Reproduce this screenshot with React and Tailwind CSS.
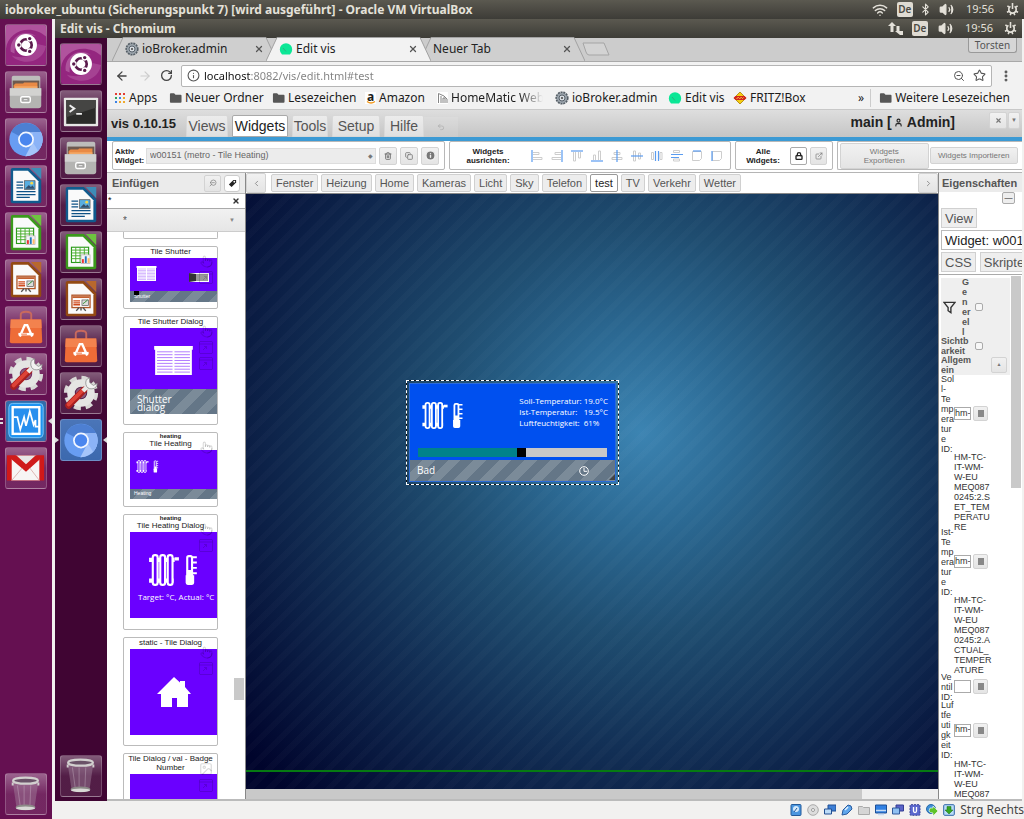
import React, { useState } from 'react';
import {
  ArrowLeft, ArrowRight, RotateCw, Info, ZoomOut, Star, MoreVertical, X, Wifi, Bluetooth, Volume2,
  Trash2, Copy, Lock, ExternalLink, ChevronLeft, ChevronRight, Undo2, Pointer, Image as ImageIcon, User,
} from 'lucide-react';

const UbuntuIcon = () => (
  <svg viewBox="0 0 42 42" className="w-full h-full">
    <rect width="42" height="42" rx="3" fill="#94267f" />
    <path d="M0 25C2 6 26-2 42 12V3q0-3-3-3H3Q0 0 0 3z" fill="#c678b6" opacity=".55" />
    <path d="M42 22C38 42 14 42 6 32c8 3 24 4 27-12z" fill="#c678b6" opacity=".35" />
    <path d="M5 28C3 12 20 3 32 12 20 7 8 14 9 30z" fill="#dba6d0" opacity=".35" />
    <circle cx="21" cy="21" r="11.5" fill="#fff" />
    <circle cx="21" cy="21" r="6" fill="none" stroke="#5a1a4c" strokeWidth="2.8" />
    <g stroke="#fff" strokeWidth="1.4" fill="#5a1a4c">
      <circle cx="13.4" cy="21" r="2.5" />
      <circle cx="24.9" cy="14.3" r="2.5" />
      <circle cx="24.9" cy="27.7" r="2.5" />
    </g>
  </svg>
);

const TerminalIcon = () => (
  <svg viewBox="0 0 42 42" className="w-full h-full">
    <rect x="3" y="7" width="36" height="30" rx="1" fill="#e6e6e4" />
    <rect x="5.5" y="9.5" width="31" height="25" fill="#2b2b29" />
    <path d="M5.5 9.5h31v8l-31 10z" fill="#454543" />
    <path d="M9 15l5 3.5-5 3.5M16 24h6" fill="none" stroke="#eee" strokeWidth="2" />
  </svg>
);

const FilesIcon = () => (
  <svg viewBox="0 0 42 42" className="w-full h-full">
    <path d="M6 6q0-2 2-2h26q2 0 2 2v14H6z" fill="#bdbdbb" />
    <path d="M7 9h28v11H7z" fill="#6d5a50" />
    <path d="M8 14l2-2h8l1-1h14v8H8z" fill="#e98a45" />
    <path d="M9 15h24v4H9z" fill="#f3a866" />
    <path d="M4 17h33v18q0 3-3 3H7q-3 0-3-3z" fill="#b4b4b2" />
    <path d="M4 17h33v8H4z" fill="#d2d2d0" />
    <rect x="15.5" y="26" width="10" height="6" rx="1.5" fill="#a9a9a7" stroke="#fff" strokeWidth="1.5" />
    <rect x="18" y="28.3" width="5" height="1.8" fill="#fff" stroke="#777" strokeWidth=".5" />
  </svg>
);

const ChromiumIcon = () => (
  <svg viewBox="0 0 42 42" className="w-full h-full">
    <circle cx="21" cy="21.5" r="17.5" fill="#689df2" />
    <path d="M21 21.5L5.5 13.5A17.5 17.5 0 0 1 37 14.5z" fill="#4d7fd2" />
    <path d="M21 14h15.8a17.5 17.5 0 0 1-16.5 25l7.5-14z" fill="#a5c5fa" />
    <path d="M28 14.500h8.800a17.500 17.500 0 0 1-3 19l-5-8z" fill="#8bb3f7" />
    <circle cx="21" cy="21.5" r="8.3" fill="#f3f7ff" />
    <circle cx="21" cy="21.5" r="6.5" fill="#4a86ee" />
  </svg>
);

const Paper = ({ color, light, children }) => (
  <svg viewBox="0 0 42 42" className="w-full h-full">
    <path d="M5 4q0-2 2-2h17l13 13v22q0 2-2 2H7q-2 0-2-2z" fill={color} />
    <path d="M7.5 5h15.5L34 16v20.5H7.5z" fill="#fafafa" />
    <path d="M26 2h11v12z" fill={light} />
    {children}
  </svg>
);

const WriterIcon = () => (
  <Paper color="#115b8e" light="#3d8cb7">
    <path d="M11 17h7M11 20h7M11 23h7M11 27h20M11 30h20M11 33h14" stroke="#0e5387" strokeWidth="1.3" />
    <rect x="19.5" y="15.5" width="11" height="9" fill="#58aee0" stroke="#333" strokeWidth=".6" />
    <path d="M20 24l4-4 2 2 2-1.500 2 3.500z" fill="#35506b" />
    <circle cx="27" cy="18" r="1.5" fill="#f6d84b" />
  </Paper>
);

const CalcIcon = () => (
  <Paper color="#3b9a1c" light="#6dc43f">
    <rect x="11" y="16" width="18" height="16" fill="#fff" stroke="#2a9a1a" strokeWidth="1.2" />
    <path d="M11 19h18M11 22h18M11 25h18M11 28h18M15.500 16v16M20 16v16M24.500 16v16" stroke="#49ad2c" strokeWidth="1" />
    <rect x="21" y="24" width="9.5" height="9" fill="#f4f4f4" stroke="#aaa" strokeWidth=".7" />
    <path d="M23 32.500v-4" stroke="#e33" strokeWidth="2" />
    <path d="M26 32.500v-7" stroke="#27b" strokeWidth="2" />
    <path d="M29 32.500v-5" stroke="#fb6" strokeWidth="2" />
  </Paper>
);

const ImpressIcon = () => (
  <Paper color="#934a13" light="#b8682d">
    <rect x="11.5" y="17" width="19" height="13" fill="#fff" stroke="#b2582a" strokeWidth="1.4" />
    <path d="M12 19h18" stroke="#c26030" strokeWidth="2" />
    <path d="M13 23h7M13 25h7M13 27h7" stroke="#cf4b1e" strokeWidth="1.4" />
    <rect x="22" y="22" width="7" height="6" fill="#dcdcdc" stroke="#555" strokeWidth=".7" />
    <path d="M23 26l2-1.500 3-2.500" fill="none" stroke="#2a8d2a" />
    <path d="M19 30l-3 3.500M23 30l3 3.500M21 30v3" stroke="#555" strokeWidth="1.5" />
  </Paper>
);

const SoftwareIcon = () => (
  <svg viewBox="0 0 42 42" className="w-full h-full">
    <path d="M15.500 14V8q0-3 5.500-3t5.500 3v6" fill="none" stroke="#c9695d" strokeWidth="2" />
    <path d="M5 13h32l1 23q0 2-2 2H6q-2 0-2-2z" fill="#ee6c37" />
    <path d="M5 13h32l.5 9h-33z" fill="#f3824e" />
    <path d="M14.500 31l5.200-12h2.600l5.200 12" fill="none" stroke="#fff" strokeWidth="2.5" />
    <path d="M13 28.500h16" stroke="#fff" strokeWidth="2.6" />
    <path d="M16 28.500h6" stroke="#ee6c37" strokeWidth="1" />
  </svg>
);

const SettingsIcon = () => (
  <svg viewBox="0 0 42 42" className="w-full h-full">
    <circle cx="21" cy="21" r="15.5" fill="none" stroke="#d8d8d6" strokeWidth="5" strokeDasharray="7.2 4.974" />
    <circle cx="21" cy="21" r="10.5" fill="none" stroke="#e5e5e3" strokeWidth="8" />
    <circle cx="21" cy="21" r="5.5" fill="#8b5a7c" />
    <path d="M8 34L24 18" stroke="#a91f1f" strokeWidth="7" strokeLinecap="round" />
    <path d="M8 33L23 18" stroke="#dd4337" strokeWidth="4" strokeLinecap="round" />
    <path d="M23 19L31 11" stroke="#e9e9e8" strokeWidth="4.5" />
    <path d="M30 5a6 6 0 1 0 8 6l-4 2-4-3z" fill="#f2f2f1" stroke="#888" strokeWidth=".8" />
  </svg>
);

const MonitorIcon = () => (
  <svg viewBox="0 0 42 42" className="w-full h-full">
    <rect width="42" height="42" rx="3" fill="#316cab" />
    <rect x="3" y="2.5" width="36" height="36" rx="4" fill="#1e93f1" stroke="#7cc6fb" />
    <rect x="7" y="6.5" width="28" height="28" fill="#278fee" stroke="#fff" strokeWidth="2.5" />
    <path d="M8 17h4l3 13 4-13 2 9 4-15 4 14 2-5v7h4" fill="none" stroke="#fff" strokeWidth="1.8" />
  </svg>
);

const GmailIcon = () => (
  <svg viewBox="0 0 42 42" className="w-full h-full">
    <path d="M1 8h39v26H1z" fill="#d01919" />
    <path d="M6 10h29v24H6z" fill="#f7f5f4" />
    <path d="M10 8h22L21 19z" fill="#e9e7e6" />
    <path d="M1 8h10l10 9L31 8h9L21 25z" fill="#cf1b1b" />
    <path d="M6 34l11-13M35 34L25 21" stroke="#dcb3b0" />
  </svg>
);

const TrashIcon = () => (
  <svg viewBox="0 0 42 42" className="w-full h-full">
    <path d="M7 8h27l-4 27q-9 5-19 0z" fill="#a98fa6" opacity=".4" />
    <path d="M12 12l3 22M19 12v24M26 12l-1 24" stroke="#d8cbd7" strokeWidth="1" opacity=".35" />
    <ellipse cx="20.5" cy="35" rx="10.5" ry="3" fill="#8c8a87" />
    <ellipse cx="20.5" cy="36" rx="10" ry="1.8" fill="#d9d8d6" />
    <ellipse cx="20.5" cy="7" rx="13" ry="3.2" fill="#6a5268" stroke="#d2d0cf" strokeWidth="2.4" />
    <path d="M7 9v3M34 9v3" stroke="#d2d0cf" strokeWidth="2" />
  </svg>
);

const GearBall = () => (
  <svg viewBox="0 0 14 14" className="w-[14px] h-[14px] shrink-0">
    <circle cx="7" cy="7" r="5.8" fill="#9aa3ab" stroke="#555e66" strokeWidth="1.6" strokeDasharray="2 .8" />
    <circle cx="7" cy="7" r="3" fill="#d8dde2" stroke="#59636c" />
    <circle cx="7" cy="7" r="1" fill="#444" />
  </svg>
);

const VisIcon = () => (
  <svg viewBox="0 0 14 14" className="w-[14px] h-[14px] shrink-0">
    <path d="M3 12.500Q.8 10.500.8 7.500a6.200 6.200 0 0 1 12.400 0q0 3-2.200 5z" fill="#0be796" />
    <path d="M4 6l3 3.500" stroke="#3a9f78" strokeWidth=".8" />
  </svg>
);

const FolderIcon = () => (
  <svg viewBox="0 0 14 12" className="w-[13px] h-[12px] shrink-0">
    <path d="M1 2q0-1 1-1h3.500L7 2.500h5.500q1 0 1 1V10q0 1-1 1H2q-1 0-1-1z" fill="#565656" />
  </svg>
);

const AppsIcon = () => (
  <svg viewBox="0 0 12 12" className="w-[12px] h-[12px] shrink-0">
    <path d="M1 1h2v2H1zM5 1h2v2H5zM9 1h2v2H9z" fill="#e23b30" />
    <path d="M1 5h2v2H1z" fill="#2ea25b" />
    <path d="M5 5h2v2H5zM1 9h2v2H1z" fill="#3b82e4" />
    <path d="M9 5h2v2H9zM5 9h2v2H5zM9 9h2v2H9z" fill="#f0a92c" />
  </svg>
);

const AmazonIcon = () => (
  <span className="flex flex-col items-center w-[11px] h-[12px] shrink-0 bg-white">
    <span className="font-bold text-[12px] leading-[9px]">a</span>
    <svg viewBox="0 0 10 3" className="w-[10px] h-[3px]"><path d="M1 .5q4 3 8 0" fill="none" stroke="#f29a1f" strokeWidth="1.3" /></svg>
  </span>
);

const HomeMaticIcon = () => (
  <svg viewBox="0 0 11 12" className="w-[11px] h-[12px] shrink-0">
    <path d="M0 0h11v12H0z" fill="#fff" />
    <path d="M1.500 11V1.500L7 4l3 3v4M4 11V4M6 11V6h2v5" fill="none" stroke="#777" strokeWidth=".9" />
  </svg>
);

const FritzIcon = () => (
  <svg viewBox="0 0 14 14" className="w-[14px] h-[14px] shrink-0">
    <path d="M7 1L13 7 7 13 1 7z" fill="#f5cc12" stroke="#a87c00" strokeWidth=".8" />
    <path d="M.5 7l2-2h9l2 2-2 2h-9z" fill="#d3241c" />
    <path d="M3.500 7.500l2-1 1 1 2-1 1 1 1-1" fill="none" stroke="#ffd84a" strokeWidth=".9" />
  </svg>
);

const PowerGear = () => (
  <svg viewBox="0 0 14 14" className="w-[13px] h-[13px]" fill="none" stroke="#e4e1d9">
    <path d="M4.800 3.600a4 4 0 1 0 4.400 0" strokeWidth="1.8" />
    <path d="M7 0v6.500M1.500 3l2 1.500M12.500 3l-2 1.500M1 10l2.500-1M13 10l-2.500-1M4.500 13l1-2M9.500 13l-1-2" strokeWidth="1.7" />
  </svg>
);

const NetArrows = () => (
  <svg viewBox="0 0 16 14" className="w-[16px] h-[14px]" fill="#e4e1d9">
    <path d="M4 0l4 4H5.500v6h-3V4H0z" />
    <path d="M8.500 4h3v5H15v4H12L7 9h1.500z" />
  </svg>
);

const Radiator = () => (
  <svg viewBox="0 0 28 30" className="w-full h-full" fill="none" stroke="#fff">
    <path d="M0 5.500h24M0 25h23" strokeWidth="4" />
    <path d="M24 4.500h4" strokeWidth="3" />
    <rect x="3.500" y="1" width="4.500" height="28" rx="2" strokeWidth="2" fill="currentColor" />
    <rect x="10.500" y="1" width="4.500" height="28" rx="2" strokeWidth="2" fill="currentColor" />
    <rect x="17.500" y="1" width="4.500" height="28" rx="2" strokeWidth="2" fill="currentColor" />
  </svg>
);

const Thermometer = () => (
  <svg viewBox="0 0 12 30" className="w-full h-full" fill="#fff">
    <rect x="2" y="2" width="4.5" height="22" rx="1.5" fill="none" stroke="#fff" strokeWidth="2" />
    <path d="M.5 20h8v7q0 2-2 2h-4q-2 0-2-2zM2.500 15h4v8h-4z" />
    <path d="M7 3h4M7 8h4M7 13h4M7 18h4" stroke="#fff" strokeWidth="1.8" />
  </svg>
);

const Blinds = () => (
  <svg viewBox="0 0 40 30" className="w-full h-full">
    <path d="M0 0h40v4H0zM1 4h38v26H1z" fill="#fff" />
    <path d="M3 6h16M21 6h16M3 9h16M21 9h16M3 12h16M21 12h16M3 15h16M21 15h16M3 18h16M21 18h16M3 21h16M21 21h16M3 24h16M21 24h16M3 27h16M21 27h16" stroke="#a76bff" strokeWidth=".9" />
  </svg>
);

const House = () => (
  <svg viewBox="0 0 34 30" className="w-[34px] h-[30px]" fill="#fff">
    <path d="M17 0l6 5.500V4h5v6l6 7h-3v13H20v-9h-5v9H4V17H0z" />
  </svg>
);

const WindowBadge = () => (
  <svg viewBox="0 0 14 13" className="w-[14px] h-[13px]" fill="none" stroke="currentColor">
    <rect x=".5" y=".5" width="13" height="12" rx="1" />
    <path d="M.5 3h13M4 9l3-3M5 5.500h2.500V8" />
  </svg>
);

const iconsHost = [
  { name: 'Dash', icon: UbuntuIcon }, { name: 'Dateien', icon: FilesIcon }, { name: 'Chromium', icon: ChromiumIcon },
  { name: 'Writer', icon: WriterIcon }, { name: 'Calc', icon: CalcIcon }, { name: 'Impress', icon: ImpressIcon },
  { name: 'Software', icon: SoftwareIcon }, { name: 'Einstellungen', icon: SettingsIcon },
  { name: 'Monitor', icon: MonitorIcon, pips: 'M0 0h3v2H0zM0 4h3v2H0z' }, { name: 'Gmail', icon: GmailIcon },
];

const iconsGuest = [
  { name: 'Dash', icon: UbuntuIcon }, { name: 'Terminal', icon: TerminalIcon }, { name: 'Dateien', icon: FilesIcon },
  { name: 'Writer', icon: WriterIcon }, { name: 'Calc', icon: CalcIcon }, { name: 'Impress', icon: ImpressIcon },
  { name: 'Software', icon: SoftwareIcon }, { name: 'Einstellungen', icon: SettingsIcon },
  { name: 'Chromium', icon: ChromiumIcon, pips: 'M0 0l4 3-4 3z', active: true },
];

const Tile = ({ item }) => {
  const Icon = item.icon;
  return (
    <div className="relative px-[5px]">
      <button
        aria-label={item.name}
        className={`block w-[42px] h-[42px] rounded-[3px] border border-white/20 bg-gradient-to-b ${item.active ? 'from-[#4a75b8] to-[#3c69ae]' : 'from-white/35 via-white/10 to-white/10'}`}
      >
        <Icon />
      </button>
      {item.pips && (
        <>
          <svg viewBox="0 0 4 6" className="absolute left-0 top-[18px] w-[4px] h-[6px]"><path d={item.pips} fill="#ddd" /></svg>
          <svg viewBox="0 0 4 6" className="absolute right-0 top-[18px] w-[4px] h-[6px]"><path d="M4 0L0 3l4 3z" fill="#ddd" /></svg>
        </>
      )}
    </div>
  );
};

const Launcher = ({ items, className }) => (
  <nav className={`flex flex-col gap-[5px] w-[52px] shrink-0 pt-[5px] pb-1 ${className}`}>
    {items.map((item) => <Tile key={item.name} item={item} />)}
    <div className="flex-1" />
    <Tile item={{ name: 'Papierkorb', icon: TrashIcon }} />
  </nav>
);

const TitleBar = ({ title, children }) => (
  <header className="flex items-center justify-between h-[19px] shrink-0 px-[5px] bg-gradient-to-b from-[#5b5950] to-[#3d3c37] text-[#e4e1d9]">
    <h1 className="text-[12px] leading-[19px] font-bold whitespace-nowrap">{title}</h1>
    <div className="flex items-center">{children}</div>
  </header>
);

const LangBox = () => (
  <span className="w-[16px] h-[15px] rounded-[2px] bg-[#dfdbd2] text-[#4a4943] text-[10px] leading-[15px] font-semibold text-center">De</span>
);

const BrowserTab = ({ label, icon, active, className = '' }) => (
  <div className={`relative flex items-center w-[165px] h-[24px] pl-[13px] pr-[13px] gap-[3px] ${active ? 'z-10' : ''} ${className}`}>
    <svg viewBox="0 0 165 24" preserveAspectRatio="none" className="absolute inset-0 w-full h-full">
      <path d="M0 24L11 .5h143L165 24" fill={active ? '#f2f2f2' : '#cfcfcf'} stroke="#a2a2a2" />
    </svg>
    {icon && <span className="relative">{icon}</span>}
    <a href="#tab" className="relative flex-1 text-[12px] text-[#222]">{label}</a>
    <button aria-label="Tab schließen" className="relative"><X size={10} strokeWidth={3} color="#555" /></button>
  </div>
);

const bookmarks = [
  { label: 'Apps', icon: <AppsIcon />, width: 'w-[55px]' },
  { label: 'Neuer Ordner', icon: <FolderIcon />, width: 'w-[103px]' },
  { label: 'Lesezeichen', icon: <FolderIcon />, width: 'w-[93px]' },
  { label: 'Amazon', icon: <AmazonIcon />, width: 'w-[72px]' },
  { label: 'HomeMatic WebUI', icon: <HomeMaticIcon />, width: 'w-[118px]', fade: true },
  { label: 'ioBroker.admin', icon: <GearBall />, width: 'w-[113px]' },
  { label: 'Edit vis', icon: <VisIcon />, width: 'w-[65px]' },
  { label: 'FRITZ!Box', icon: <FritzIcon />, width: 'w-[75px]' },
];

const BookmarksBar = () => (
  <div className="flex items-center h-[21px] pl-[7px] pr-3 pb-[2px] text-[12px] leading-[18px] text-[#1c1c1c] whitespace-nowrap border-b border-[#c8c8c8]">
    {bookmarks.map((b) => (
      <a key={b.label} href="#bookmark" className={`flex items-center gap-[3px] shrink-0 ${b.width}`}>
        {b.icon}
        <span className={b.fade ? 'w-[92px] overflow-hidden bg-gradient-to-r from-[#1c1c1c] from-75% to-transparent bg-clip-text text-transparent' : ''}>{b.label}</span>
      </a>
    ))}
    <div className="flex-1" />
    <span className="pr-[6px]">»</span>
    <a href="#more" className="flex items-center gap-[3px] pl-2 border-l border-[#ccc]"><FolderIcon />Weitere Lesezeichen</a>
  </div>
);

const Browser = () => (
  <div className="bg-[#f2f2f2] shrink-0">
    <div className="flex items-end justify-between h-[24px] bg-[#ccc] border-b border-[#a9a9a9]">
      <div className="flex items-center pl-[5px]">
        <BrowserTab label="ioBroker.admin" icon={<GearBall />} />
        <BrowserTab label="Edit vis" icon={<VisIcon />} active className="-ml-[11px]" />
        <BrowserTab label="Neuer Tab" className="-ml-[11px]" />
        <svg viewBox="0 0 28 14" className="w-[28px] h-[14px] -ml-[3px]"><path d="M1 1h21l5 12H7q-2 0-3-3z" fill="#d3d3d3" stroke="#a5a5a5" /></svg>
      </div>
      <button className="self-start w-[49px] h-[15px] mr-[5px] rounded-b-[3px] border border-t-0 border-[#999] bg-[#d6d6d6] text-[10px] leading-[15px] text-[#555]">Torsten</button>
    </div>
    <div className="flex items-center h-[27px] pl-2 pr-[9px]">
      <button aria-label="Zurück" className="w-[23px]"><ArrowLeft size={14} strokeWidth={2.2} color="#444" /></button>
      <button aria-label="Vor" className="w-[22px]"><ArrowRight size={14} color="#ccc" /></button>
      <button aria-label="Neu laden" className="w-[21px]"><RotateCw size={13} strokeWidth={2.4} color="#444" /></button>
      <div className="flex items-center flex-1 h-[22px] px-[5px] gap-1 bg-white border border-[#b5b5b5] rounded-[2px]">
        <Info size={13} color="#555" />
        <input
          aria-label="Adresse"
          defaultValue="localhost:8082/vis/edit.html#test"
          className="flex-1 min-w-0 h-[18px] text-[11px] leading-[18px] outline-none text-transparent bg-clip-text bg-[linear-gradient(90deg,#111_47px,#808080_47px)]"
        />
        <ZoomOut size={12} color="#555" />
        <Star size={13} color="#555" className="ml-1" />
      </div>
      <button aria-label="Menü" className="ml-[7px]"><MoreVertical size={14} strokeWidth={3} color="#555" /></button>
    </div>
    <BookmarksBar />
  </div>
);

const btn = 'flex items-center justify-center border border-[#d3d3d3] rounded-[2px] bg-gradient-to-b from-[#f1f1f1] to-[#e4e4e4] text-[#777]';

const AlignIcon = ({ d, line }) => (
  <svg viewBox="0 0 12 12" className="w-[12px] h-[12px]" fill="none">
    <path d={d} stroke="#cdcdcd" />
    <path d={line} stroke="#5a9cf0" strokeWidth="1.2" />
  </svg>
);

const alignIcons = [
  { name: 'Links', d: 'M2 2.500h6v2H2M2 7.500h9v2H2', line: 'M1 0v12' },
  { name: 'Rechts', d: 'M10 2.500H4v2h6M10 7.500H1v2h9', line: 'M11 0v12' },
  { name: 'Oben', d: 'M2.500 2v9h2V2M7.500 2v6h2V2', line: 'M0 1h12' },
  { name: 'Unten', d: 'M2.500 10V5h2v5M7.500 10V1h2v9', line: 'M0 11h12' },
  { name: 'Mitte vertikal', d: 'M3 2.500h6v2H3zM1 7.500h10v2H1z', line: 'M6 0v12' },
  { name: 'Mitte horizontal', d: 'M2.500 1v10h2V1zM7.500 3v6h2V3z', line: 'M0 6h12' },
  { name: 'Verteilen horizontal', d: 'M.5 2.500h2v7h-2zM9 2.500h2v7H9z', line: 'M4.500 1v10M7.500 1v10' },
  { name: 'Verteilen vertikal', d: 'M2.500.5h6v2h-6zM2.500 9h6v2h-6z', line: 'M0 4.500h12M0 7.500h8' },
  { name: 'Breite', d: 'M1.500 1.500h9v7l-2 2h-7z', line: 'M2 1h8' },
  { name: 'Höhe', d: 'M1.500 1.500h9v7l-2 2h-7z', line: 'M1 1v10' },
];

const menuTabs = [
  { label: 'Views', size: 'w-[42px] h-[22px]' },
  { label: 'Widgets', size: 'w-[56px] h-[22px]' },
  { label: 'Tools', size: 'w-[36px] h-[22px]' },
  { label: 'Setup', size: 'w-[48px] h-[22px]' },
  { label: 'Hilfe', size: 'w-[40px] h-[22px]' },
];

const VisMenu = () => {
  const [current, setCurrent] = useState('Widgets');
  return (
    <div className="flex items-end h-[27px] pl-1 shrink-0 bg-gradient-to-b from-[#dedede] to-[#c5c5c5] text-[#222]">
      <h2 className="w-[75px] self-center text-[13px] font-bold">vis 0.10.15</h2>
      <div className="flex gap-1">
        {menuTabs.map((t) => (
          <button
            key={t.label}
            onClick={() => setCurrent(t.label)}
            className={`text-[14px] border rounded-t-[2px] ${t.size} ${current === t.label ? 'bg-white border-[#aaa] text-[#222]' : 'bg-gradient-to-b from-[#ececec] to-[#e0e0e0] border-[#d8d8d8] text-[#555]'}`}
          >
            {t.label}
          </button>
        ))}
      </div>
      <button aria-label="Rückgängig" className="flex items-center justify-center w-[34px] h-[20px] self-end bg-white/10"><Undo2 size={8} color="#aaa" /></button>
      <div className="flex-1" />
      <div className="flex items-center gap-[2px] mr-[34px] self-start pt-[2px] text-[14px] leading-[20px] font-bold">
        main [<User size={9} strokeWidth={3} /> <span className="pl-[2px]">Admin]</span>
      </div>
      <div className="flex gap-px mr-[2px] self-start pt-[2px]">
        <button aria-label="Schließen" className={`w-[18px] h-[17px] ${btn}`}><X size={7} strokeWidth={4} /></button>
        <button aria-label="Mehr" className={`w-[12px] h-[17px] text-[6px] ${btn}`}>▼</button>
      </div>
    </div>
  );
};

const Ribbon = () => (
  <div className="flex gap-1 h-[32px] shrink-0 pl-[5px] pb-[2px] bg-white text-[8px] border-b border-[#b5b5b5]">
    <div className="flex items-center gap-[3px] w-[333px] shrink-0 px-[2px] border border-[#b8b8b8] rounded-[2px]">
      <label htmlFor="active-widget" className="w-[28px] font-bold leading-[9px] text-[#222]">Aktiv Widget:</label>
      <div className="relative flex-1">
        <select id="active-widget" className="block appearance-none w-full h-[16px] pl-[3px] bg-[#ececec] border border-[#ddd] text-[9px] text-[#666]">
          <option>w00151 (metro - Tile Heating)</option>
        </select>
        <span className="absolute right-[3px] top-0 text-[6px] leading-[16px] text-[#777] pointer-events-none">◆</span>
      </div>
      <button aria-label="Löschen" className={`w-[18px] h-[18px] ${btn}`}><Trash2 size={8} strokeWidth={3} /></button>
      <button aria-label="Kopieren" className={`w-[18px] h-[18px] ${btn}`}><Copy size={8} strokeWidth={2.5} /></button>
      <button aria-label="Info" className={`w-[18px] h-[18px] mr-[3px] ${btn}`}><Info size={11} fill="#777" color="#eee" strokeWidth={3} /></button>
    </div>
    <div className="flex items-center justify-end w-[282px] shrink-0 pr-[7px] border border-[#b8b8b8] rounded-[2px]">
      <div className="w-[46px] mr-[20px] text-center font-bold leading-[9px] text-[#222]">Widgets ausrichten:</div>
      <div className="flex gap-2">
        {alignIcons.map((a) => <button key={a.name} aria-label={a.name}><AlignIcon d={a.d} line={a.line} /></button>)}
      </div>
    </div>
    <div className="flex items-center gap-[3px] w-[98px] shrink-0 pl-[9px] border border-[#b8b8b8] rounded-[2px]">
      <div className="w-[36px] mr-[6px] text-center font-bold leading-[9px] text-[#222]">Alle Widgets:</div>
      <button aria-label="Sperren" className="flex items-center justify-center w-[17px] h-[18px] border border-[#aaa] rounded-[2px]"><Lock size={8} strokeWidth={4} color="#222" /></button>
      <button aria-label="Extern" className={`w-[17px] h-[18px] ${btn}`}><ExternalLink size={8} /></button>
    </div>
    <div className="flex items-center flex-1 gap-px pl-[2px] pr-1 border border-r-0 border-[#b8b8b8] rounded-l-[2px]">
      <button className={`flex-1 h-[26px] leading-[9px] ${btn}`}><span className="w-[48px]">Widgets Exportieren</span></button>
      <button className={`flex-1 h-[17px] whitespace-nowrap ${btn}`}>Widgets Importieren</button>
    </div>
  </div>
);

const stripes = 'bg-[repeating-linear-gradient(135deg,#647687_0_9px,#7b8b99_9px_18px)]';

const Preview = ({ title, category, children, badges, className }) => (
  <article className={`relative flex flex-col shrink-0 w-[95px] pl-[6px] border border-[#bbb] rounded-[2px] overflow-hidden ${className}`}>
    <h3 className="text-center text-[8px] leading-[9px] text-[#222] -ml-[6px] pb-[2px]">
      {category && <b className="block text-[6px] leading-[6px]">{category}</b>}
      {title}
    </h3>
    {children}
    <div className="absolute right-[4px] top-[8px] flex flex-col items-center gap-[3px] text-black/15">{badges}</div>
  </article>
);

const WidgetList = () => (
  <div className="flex flex-1 min-h-0 overflow-hidden">
    <div className="flex flex-col flex-1 gap-[7px] pl-4 overflow-hidden">
      <div className="w-[95px] h-[7px] shrink-0 border border-t-0 border-[#bbb] rounded-b-[2px]" />
      <Preview title="Tile Shutter" className="h-[63px]" badges={<><Pointer size={13} /><WindowBadge /></>}>
        <div className="flex justify-between items-start h-[33px] pl-[6px] pr-2 pt-2 bg-[#6a00ff]">
          <span className="w-[21px] h-[15px]"><Blinds /></span>
          <span className="w-[20px] h-[9px] mt-[7px] border border-white border-l-[7px] border-l-[#333] bg-[#999]" />
        </div>
        <div className={`relative h-[11px] pl-1 text-[5px] leading-[10px] text-white ${stripes}`}>
          <span className="absolute left-[4px] top-0 w-[5px] h-[4px] bg-black" />Shutter
        </div>
      </Preview>
      <Preview title="Tile Shutter Dialog" className="h-[109px]" badges={<><Pointer size={13} /><WindowBadge /><WindowBadge /></>}>
        <div className="flex items-center justify-center h-[61px] bg-[#6a00ff]"><span className="w-[41px] h-[29px] mt-1"><Blinds /></span></div>
        <div className={`h-[25px] pt-[6px] pl-[7px] font-[Open_Sans] text-[10px] leading-[8px] text-white ${stripes}`}>Shutter<br />dialog</div>
      </Preview>
      <Preview title="Tile Heating" category="heating" className="h-[75px]" badges={<Pointer size={13} />}>
        <div className="flex gap-1 h-[39px] pl-[6px] pt-[10px] bg-[#6a00ff] text-[#6a00ff]">
          <span className="w-[13px] h-[13px]"><Radiator /></span>
          <span className="w-[6px] h-[13px]"><Thermometer /></span>
        </div>
        <div className={`h-[10px] pl-1 text-[5px] leading-[8px] text-white ${stripes}`}>Heating</div>
      </Preview>
      <Preview title="Tile Heating Dialog" category="heating" className="h-[116px]" badges={<><Pointer size={13} /><WindowBadge /></>}>
        <div className="flex flex-wrap content-start justify-center gap-x-[6px] h-[86px] pt-[22px] bg-[#6a00ff] text-[#6a00ff]">
          <span className="w-[30px] h-[32px]"><Radiator /></span>
          <span className="w-[13px] h-[32px]"><Thermometer /></span>
          <p className="w-full pl-2 pt-[6px] font-[Open_Sans] text-[8px] leading-[10px] text-white whitespace-nowrap">Target: °C, Actual: °C</p>
        </div>
      </Preview>
      <Preview title="static - Tile Dialog" className="h-[109px]" badges={<><Pointer size={13} /><WindowBadge /></>}>
        <div className="flex items-center justify-center h-[86px] bg-[#6a00ff]"><House /></div>
      </Preview>
      <Preview title="Tile Dialog / val - Badge Number" className="h-[110px]" badges={<><ImageIcon size={14} /><WindowBadge /></>}>
        <div className="h-[86px] bg-[#6a00ff]" />
      </Preview>
    </div>
    <div className="flex w-[11px] pt-[446px]"><div className="w-[10px] h-[22px] bg-[#c9c9c9]" /></div>
  </div>
);

const InsertPanel = () => (
  <aside className="flex flex-col w-[139px] shrink-0 bg-white border-r border-[#888]">
    <div className="flex items-center gap-[3px] h-[21px] shrink-0 pl-[5px] pr-[5px] bg-[#ebebeb] border-b border-[#bbb]">
      <h2 className="flex-1 text-[11px] font-bold text-[#555]">Einfügen</h2>
      <button aria-label="Filter" className={`w-[17px] h-[17px] ${btn}`}><ZoomOut size={8} className="-scale-x-100" /></button>
      <button aria-label="Tags" className="flex items-center justify-center w-[16px] h-[17px] rounded-[3px] border border-[#ccc] bg-white">
        <svg viewBox="0 0 10 10" className="w-[9px] h-[9px]"><path d="M1 6l5-5h3v3L4 9z" fill="#222" /><circle cx="7" cy="3" r="1" fill="#fff" /></svg>
      </button>
    </div>
    <div className="flex items-center h-[15px] shrink-0 pl-[1px] pr-[5px] border-b border-[#aaa]">
      <input aria-label="Suche" defaultValue="*" className="flex-1 min-w-0 text-[9px] outline-none" />
      <button aria-label="Leeren"><X size={8} strokeWidth={4} color="#333" /></button>
    </div>
    <div className="relative shrink-0 border-b border-[#ccc]">
      <select aria-label="Gruppe" className="block appearance-none w-full h-[22px] pl-4 bg-gradient-to-b from-[#f1f1f1] to-[#e6e6e6] text-[10px] text-[#555]"><option>*</option></select>
      <span className="absolute right-[10px] top-0 text-[6px] leading-[22px] text-[#888] pointer-events-none">▼</span>
    </div>
    <WidgetList />
  </aside>
);

const views = ['Fenster', 'Heizung', 'Home', 'Kameras', 'Licht', 'Sky', 'Telefon', 'test', 'TV', 'Verkehr', 'Wetter'];

const ViewTabs = () => {
  const [view, setView] = useState('test');
  return (
    <div className="flex h-[21px] shrink-0 bg-white border-b border-[#888]">
      <button aria-label="Zurück" className={`w-[20px] ${btn}`}><ChevronLeft size={9} /></button>
      <div className="flex flex-1 gap-[3px] pl-[5px] pt-px overflow-hidden">
        {views.map((v) => (
          <button
            key={v}
            onClick={() => setView(v)}
            className={`h-[18px] px-1 text-[11px] leading-[16px] border rounded-[2px] ${view === v ? 'bg-white border-[#999] text-[#222]' : 'bg-[#ededed] border-[#d0d0d0] text-[#555]'}`}
          >
            {v}
          </button>
        ))}
      </div>
      <button aria-label="Weiter" className={`w-[20px] ${btn}`}><ChevronRight size={9} /></button>
    </div>
  );
};

const readings = [
  ['Soll-Temperatur:', '19.0°C'],
  ['Ist-Temperatur:', '19.5°C'],
  ['Luftfeuchtigkeit:', '61%'],
];

const HeatingWidget = () => (
  <div className="absolute left-[160px] top-[186px] w-[213px] h-[105px] p-[2px] border border-[#111] outline-1 outline-dashed -outline-offset-1 outline-white">
    <div className="flex flex-col h-full font-[Open_Sans] text-white border border-[#2c6bd8] bg-[#0050ef]">
      <div className="flex flex-1 pl-3 pt-[11px] text-[#0050ef]">
        <span className="w-[26px] h-[27px] mt-[7px]"><Radiator /></span>
        <span className="w-[12px] h-[27px] ml-1 mt-[7px]"><Thermometer /></span>
        <table className="self-start ml-auto mr-[7px] text-[8px] leading-[11px] text-white">
          <tbody>
            {readings.map(([k, v]) => <tr key={k}><td className="pr-[2px]">{k}</td><td>{v}</td></tr>)}
          </tbody>
        </table>
      </div>
      <div className="flex mx-2 mb-[3px] h-[9px]">
        <div className="w-[99px] bg-[#00828a]" />
        <div className="w-[9px] bg-black" />
        <div className="flex-1 bg-[#c8c8c8]" />
      </div>
      <div className={`relative flex items-center justify-between h-[21px] pl-[7px] pr-[26px] text-[10px] ${stripes}`}>
        Bad
        <svg viewBox="0 0 10 10" className="w-[10px] h-[10px]" fill="none" stroke="#fff"><circle cx="5" cy="5" r="4.3" /><path d="M5 2v3.300h3" /></svg>
        <svg viewBox="0 0 6 6" className="absolute right-0 bottom-[1px] w-[6px] h-[6px]"><path d="M6 0v6H0z" fill="#444" /></svg>
      </div>
    </div>
  </div>
);

const Canvas = () => (
  <main className="flex flex-col flex-1 min-w-0">
    <ViewTabs />
    <div className="relative flex flex-col justify-end flex-1 bg-[repeating-linear-gradient(135deg,#ffffff05_0_6px,transparent_6px_14px),radial-gradient(circle_at_57%_40%,#3c84b2_0%,#2c6a94_18%,#1f4d70_38%,#122f55_60%,#00042c_95%)]">
      <HeatingWidget />
      <div className="h-[2px] mb-[17px] bg-[#067a12]" />
    </div>
    <div className="h-[10px] shrink-0 bg-[#eee]"><div className="w-[616px] h-[10px] bg-[#c9c9c9]" /></div>
  </main>
);

const fields = [
  { label: 'Sol\nl-\nTe\nmp\nera\ntur\ne\nID:', value: 'hm-', id: 'HM-TC-\nIT-WM-\nW-EU\nMEQ087\n0245:2.S\nET_TEM\nPERATU\nRE', labelH: 'h-[77px]', idH: 'h-[76px]' },
  { label: 'Ist-\nTe\nmp\nera\ntur\ne\nID:', value: 'hm-', id: 'HM-TC-\nIT-WM-\nW-EU\nMEQ087\n0245:2.A\nCTUAL_\nTEMPER\nATURE', labelH: 'h-[67px]', idH: 'h-[77px]' },
  { label: 'Ve\nntil\nID:', value: '', id: '', labelH: 'h-[29px]', idH: 'h-0' },
  { label: 'Luf\ntfe\nuti\ngk\neit\nID:', value: 'hm-', id: 'HM-TC-\nIT-WM-\nW-EU\nMEQ087\n0245:1.H', labelH: 'h-[58px]', idH: 'h-[48px]' },
];

const PropertyField = ({ field, index }) => (
  <div>
    <div className={`flex items-center ${field.labelH}`}>
      <label htmlFor={`prop-${index}`} className="w-[13px] leading-[10px] whitespace-pre">{field.label}</label>
      <input id={`prop-${index}`} defaultValue={field.value} className="w-[17px] h-[13px] bg-white border border-[#aaa] text-[9px] outline-none" />
      <button type="button" aria-label="ID wählen" className={`w-[15px] h-[15px] ml-[2px] ${btn}`}><span className="w-[6px] h-[7px] bg-[#888]" /></button>
    </div>
    <p className={`pl-[13px] leading-[10px] whitespace-pre ${field.idH}`}>{field.id}</p>
  </div>
);

const PropertiesPanel = () => (
  <aside className="flex flex-col w-[84px] shrink-0 overflow-hidden bg-white border-l border-[#888]">
    <div className="flex items-center h-[19px] shrink-0 pl-[3px] pt-[2px] bg-[#ebebeb]"><h2 className="text-[11px] font-bold text-[#555]">Eigenschaften</h2></div>
    <div className="flex justify-end pr-[7px] shrink-0"><button aria-label="Minimieren" className="w-[13px] h-[12px] border border-[#aaa] rounded-[2px] bg-[#eee] text-[8px] leading-[8px]">—</button></div>
    <div className="flex flex-wrap gap-x-1 gap-y-[2px] shrink-0 w-[110px] pl-[2px] pt-1 text-[13px] text-[#555]">
      <button className="h-[20px] px-[3px] border border-[#d0d0d0] bg-[#eee]">View</button>
      <button className="h-[20px] w-[100px] pl-[3px] text-left border border-[#bbb] bg-white text-[#222] whitespace-nowrap">Widget: w00151</button>
      <button className="h-[20px] px-[3px] border border-[#d0d0d0] bg-[#eee]">CSS</button>
      <button className="h-[20px] px-[3px] border border-[#d0d0d0] bg-[#eee]">Skripte</button>
    </div>
    <div className="flex flex-1 min-h-0 mt-[2px] pl-[2px] border-t border-[#aaa] text-[9px] text-[#333]">
      <form className="flex-1 min-w-0 pt-[3px] overflow-hidden">
        <div className="pr-px font-bold text-[#555]">
          <div className="flex items-center h-[58px] pl-[2px] bg-[#efefef]">
            <svg viewBox="0 0 14 14" className="w-[13px] h-[13px]"><path d="M1 1.500h12L8.500 7v5.500l-3-2V7z" fill="none" stroke="#333" strokeWidth="1.5" /></svg>
            <label htmlFor="generell" className="w-[13px] ml-[6px] leading-[10px] whitespace-pre">{'G\ne\nn\ner\nel\nl'}</label>
            <input id="generell" type="checkbox" className="appearance-none w-[8px] h-[8px] border border-[#aaa] rounded-[2px] bg-white/50" />
          </div>
          <div className="flex items-center h-[19px] bg-[#efefef]">
            <label htmlFor="sichtbarkeit" className="w-[34px] leading-[10px] whitespace-pre">{'Sichtb\narkeit'}</label>
            <input id="sichtbarkeit" type="checkbox" className="appearance-none w-[8px] h-[8px] border border-[#aaa] rounded-[2px] bg-white/50" />
          </div>
          <div className="flex items-center justify-between h-[20px] bg-[#efefef]">
            <span className="leading-[10px] whitespace-pre">{'Allgem\nein'}</span>
            <button type="button" aria-label="Einklappen" className={`w-[16px] h-[16px] mr-[3px] text-[5px] ${btn}`}>▲</button>
          </div>
        </div>
        {fields.map((f, i) => <PropertyField key={f.label} field={f} index={i} />)}
      </form>
      <div className="w-[10px] pt-px mr-px bg-white"><div className="h-[212px] bg-[#c9c9c9]" /></div>
    </div>
  </aside>
);

const StatusBar = () => (
  <footer className="flex items-center justify-end h-[18px] shrink-0 gap-[5px] bg-[#f2f1f0] text-[12px] text-[#444]">
    <svg viewBox="0 0 12 12" className="w-[12px] h-[12px]"><rect x="1" y=".5" width="10" height="11" rx="1" fill="#4b96df" stroke="#235a9a" /><circle cx="6" cy="5" r="3" fill="#d5e9fb" /><path d="M4 8l3-4" stroke="#235a9a" /></svg>
    <svg viewBox="0 0 12 12" className="w-[12px] h-[12px]"><circle cx="6" cy="6" r="5.3" fill="#ddd" stroke="#aaa" /><circle cx="6" cy="6" r="1.5" fill="#fff" stroke="#999" /></svg>
    <svg viewBox="0 0 12 12" className="w-[12px] h-[12px]"><path d="M4 1h8v6H4z" fill="#3d7fd6" stroke="#234f92" /><path d="M.5 5h7v5h-7z" fill="#bcdcf8" stroke="#234f92" /></svg>
    <svg viewBox="0 0 12 12" className="w-[12px] h-[12px]"><path d="M1 11l1-5 5-5q4 0 4 4l-5 5z" fill="#5fa6ec" stroke="#2a5c9f" /><path d="M4 6l3-3" stroke="#e4f1fd" strokeWidth="1.5" /></svg>
    <svg viewBox="0 0 12 12" className="w-[12px] h-[12px]"><path d="M.5 2.500h4l1 1h6v7H.5z" fill="#d5d5d5" stroke="#aaa" /></svg>
    <svg viewBox="0 0 12 12" className="w-[12px] h-[12px]"><path d="M.5 1h11v8H.5z" fill="#3181e3" stroke="#1d4f96" /><path d="M1 6.500h10M3 10.500h6" stroke="#c8dcf2" strokeWidth="1.5" /></svg>
    <svg viewBox="0 0 12 12" className="w-[12px] h-[12px]"><path d="M4 1h7.500v6H4z" fill="#5a63c8" stroke="#333d92" /><path d="M.5 4h7v6h-7z" fill="#8fc0f2" stroke="#31599b" /></svg>
    <svg viewBox="0 0 12 12" className="w-[12px] h-[12px]"><rect x="1" y=".7" width="10" height="10.6" rx="1" fill="#5b68ce" stroke="#3a4499" strokeDasharray="2 1" /><path d="M4.500 3v4q0 1.500 1.500 1.500T7.500 7V3" fill="none" stroke="#fff" strokeWidth="1.3" /></svg>
    <svg viewBox="0 0 12 12" className="w-[12px] h-[12px]"><circle cx="5" cy="5" r="4.5" fill="#3f8fd8" stroke="#2b6ca8" /><path d="M4 4h3V2l5 5-5 5V9q-3 0-4-2z" fill="#5fc32b" stroke="#fff" strokeWidth=".6" /></svg>
    <svg viewBox="0 0 12 12" className="w-[12px] h-[12px]"><rect x=".7" y=".7" width="10.6" height="10.6" rx="1" fill="#b9dcf8" stroke="#2f65a8" /><path d="M4 2.500h4V6h2l-4 4-4-4h2z" fill="#35a622" stroke="#1c6b12" strokeWidth=".5" /></svg>
    <span>Strg Rechts</span>
  </footer>
);

const App = () => (
  <div className="flex flex-col h-screen overflow-hidden bg-[#f2f1f0] font-['Noto_Sans',sans-serif]">
    <TitleBar title="iobroker_ubuntu (Sicherungspunkt 7) [wird ausgeführt] - Oracle VM VirtualBox">
      <Wifi size={16} strokeWidth={2.2} className="mr-[9px]" />
      <LangBox />
      <Bluetooth size={13} className="ml-[6px] mr-[7px]" />
      <Volume2 size={15} fill="#e4e1d9" className="mr-3" />
      <span className="mr-3 text-[11px]">19:56</span>
      <PowerGear />
    </TitleBar>
    <div className="flex flex-1 min-h-0">
      <Launcher items={iconsHost} className="bg-[#651051]" />
      <div className="flex flex-col flex-1 min-w-0">
        <div className="flex flex-col flex-1 min-h-0 ml-[3px] mr-[2px]">
          <TitleBar title="Edit vis - Chromium">
            <NetArrows />
            <span className="ml-2 mr-[6px] flex"><LangBox /></span>
            <Volume2 size={15} fill="#e4e1d9" className="ml-1 mr-3" />
            <span className="mr-[11px] text-[11px]">19:56</span>
            <PowerGear />
          </TitleBar>
          <div className="flex flex-1 min-h-0">
            <Launcher items={iconsGuest} className="bg-[#400533]" />
            <div className="flex flex-col flex-1 min-w-0">
              <Browser />
              <div className="flex flex-col flex-1 min-h-0 font-['Liberation_Sans',sans-serif] border-b-2 border-[#bbb]">
                <VisMenu />
                <div className="h-1 shrink-0 bg-[#3c9ad4]" />
                <Ribbon />
                <div className="flex flex-1 min-h-0">
                  <InsertPanel />
                  <Canvas />
                  <PropertiesPanel />
                </div>
              </div>
            </div>
          </div>
        </div>
        <StatusBar />
      </div>
    </div>
  </div>
);

export default App;
